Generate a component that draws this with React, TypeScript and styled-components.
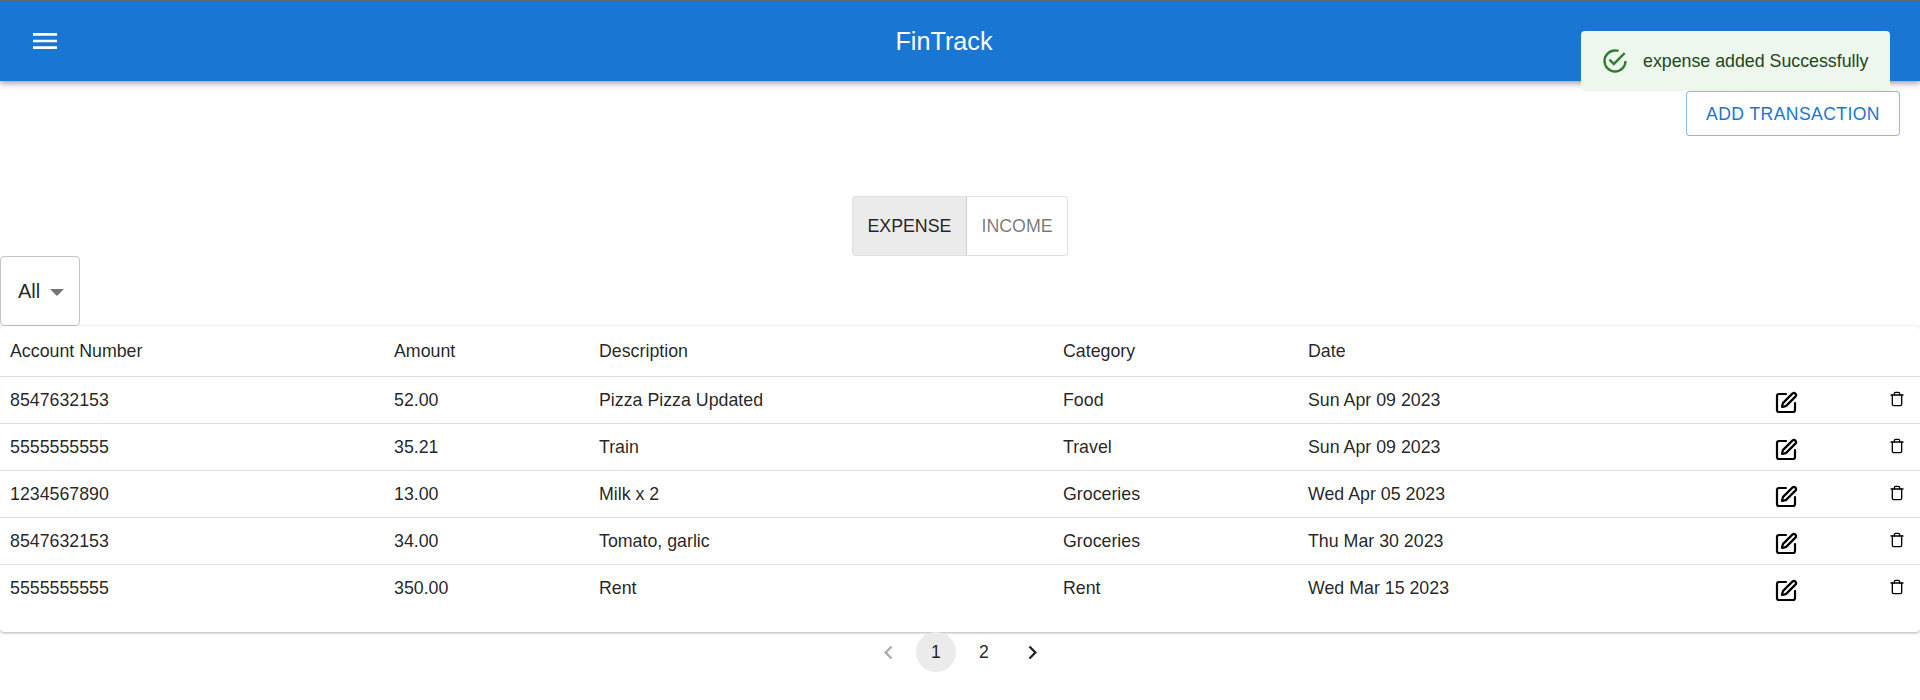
import styled, { createGlobalStyle } from "styled-components";
import { SquarePen, Trash } from "lucide-react";

interface ITransaction {
  account: string;
  amount: string;
  description: string;
  category: string;
  date: string;
}

const transactions: ITransaction[] = [
  { account: "8547632153", amount: "52.00", description: "Pizza Pizza Updated", category: "Food", date: "Sun Apr 09 2023" },
  { account: "5555555555", amount: "35.21", description: "Train", category: "Travel", date: "Sun Apr 09 2023" },
  { account: "1234567890", amount: "13.00", description: "Milk x 2", category: "Groceries", date: "Wed Apr 05 2023" },
  { account: "8547632153", amount: "34.00", description: "Tomato, garlic", category: "Groceries", date: "Thu Mar 30 2023" },
  { account: "5555555555", amount: "350.00", description: "Rent", category: "Rent", date: "Wed Mar 15 2023" },
];

const GlobalStyle = createGlobalStyle`
  * {
    box-sizing: border-box;
  }
  body {
    margin: 0;
    background: #fff;
    color: rgba(0, 0, 0, 0.87);
    font-family: "Liberation Sans", Arial, sans-serif;
  }
`;

const AppBar = styled.header`
  display: flex;
  align-items: center;
  height: 81px;
  padding: 0 24px 0 29px;
  position: relative;
  background: #1976d2;
  border-top: 1px solid #5f6b78;
  color: #fff;
  box-shadow: 0 2px 4px -1px rgba(0, 0, 0, 0.2), 0 4px 5px 0 rgba(0, 0, 0, 0.14),
    0 1px 10px 0 rgba(0, 0, 0, 0.12);
`;
const MenuButton = styled.button`
  display: flex;
  padding: 0;
  border: 0;
  background: none;
  color: inherit;
`;
const Title = styled.h1`
  flex: 1;
  margin: 0;
  padding: 1px 69px 0 0;
  font-size: 25.2px;
  font-weight: 400;
  text-align: center;
`;
const Toast = styled.div`
  position: fixed;
  top: 31px;
  left: 1581px;
  display: flex;
  align-items: center;
  gap: 14px;
  width: 309px;
  height: 60px;
  padding: 0 16px 0 20px;
  background: #edf7ed;
  border-radius: 4px;
  color: #1e4620;
  font-size: 17.8px;
  white-space: nowrap;
`;
const ButtonRow = styled.div`
  display: flex;
  justify-content: flex-end;
  padding: 10px 20px 0 0;
`;
const OutlineButton = styled.button`
  width: 214px;
  height: 45px;
  padding: 1px 0 0;
  background: #fff;
  border: 1px solid rgba(25, 118, 210, 0.5);
  border-radius: 4px;
  color: #1976d2;
  font-family: inherit;
  font-size: 17.6px;
  letter-spacing: 0.4px;
`;
const ToggleRow = styled.div`
  display: flex;
  justify-content: center;
  margin-top: 60px;
`;
const ToggleButton = styled.button<{ $active?: boolean }>`
  height: 60px;
  padding: 1px 14.5px 0;
  background: ${(props) => (props.$active ? "#ebebeb" : "#fff")};
  border: 1px solid #e0e0e0;
  border-left-width: ${(props) => (props.$active ? "1px" : "0")};
  border-radius: ${(props) => (props.$active ? "4px 0 0 4px" : "0 4px 4px 0")};
  color: ${(props) => (props.$active ? "rgba(0, 0, 0, 0.87)" : "rgba(0, 0, 0, 0.54)")};
  font-family: inherit;
  font-size: 17.8px;
  ${(props) => props.$active && "border-right-color: #cfcfcf;"}
`;
const SelectBox = styled.div`
  display: flex;
  align-items: center;
  gap: 10px;
  width: 80px;
  height: 70px;
  padding: 0 0 0 17px;
  border: 1px solid #c4c4c4;
  border-radius: 4px;
  font-size: 20px;
`;
const Caret = styled.span`
  width: 0;
  height: 0;
  margin-top: 2px;
  border-left: 7px solid transparent;
  border-right: 7px solid transparent;
  border-top: 7px solid #757575;
`;
const Paper = styled.div`
  height: 306px;
  background: #fff;
  border-radius: 4px;
  box-shadow: 0 1px 3px 0 rgba(0, 0, 0, 0.3), 0 0 1px 0 rgba(0, 0, 0, 0.1);
`;
const Table = styled.table`
  width: 100%;
  border-collapse: collapse;
  table-layout: fixed;
  font-size: 17.8px;
`;
const Th = styled.th<{ $width?: number }>`
  width: ${(props) => (props.$width ? `${props.$width}px` : "auto")};
  height: 50px;
  padding: 1px 10px 0;
  border-bottom: 1px solid #e0e0e0;
  font-weight: 400;
  text-align: left;
`;
const Td = styled.td`
  height: 47px;
  padding: 2px 10px 0;
  border-bottom: 1px solid #e0e0e0;
  tr:last-child & {
    border-bottom: 0;
  }
`;
const IconCell = styled(Td)`
  line-height: 0;
  padding: 6px 0 0 16px;
`;
const TrashCell = styled(Td)`
  line-height: 0;
  padding: 0 0 2px 17px;
`;
const Pagination = styled.nav`
  display: flex;
  justify-content: center;
  gap: 8px;
`;
const PageItem = styled.button<{ $active?: boolean; $disabled?: boolean }>`
  display: flex;
  align-items: center;
  justify-content: center;
  width: 40px;
  height: 40px;
  padding: 0;
  background: ${(props) => (props.$active ? "#ebebeb" : "transparent")};
  border: 0;
  border-radius: 50%;
  color: rgba(0, 0, 0, 0.87);
  font-family: inherit;
  font-size: 17.6px;
  opacity: ${(props) => (props.$disabled ? 0.38 : 1)};
`;

const App = () => {
  return (
    <>
      <GlobalStyle />
      <AppBar>
        <MenuButton aria-label="menu">
          <svg width="32" height="32" viewBox="0 0 24 24" fill="currentColor">
            <path d="M3 18h18v-2H3v2zm0-5h18v-2H3v2zm0-7v2h18V6H3z" />
          </svg>
        </MenuButton>
        <Title>FinTrack</Title>
      </AppBar>
      <Toast>
        <svg width="28" height="28" viewBox="0 0 24 24" fill="#2e7d32">
          <path d="M20,12A8,8 0 0,1 12,20A8,8 0 0,1 4,12A8,8 0 0,1 12,4C12.76,4 13.5,4.11 14.2,4.31L15.77,2.74C14.5,2.26 13.28,2 12,2A10,10 0 0,0 2,12A10,10 0 0,0 12,22A10,10 0 0,0 22,12M7.91,10.08L6.5,11.5L11,16L21,6L19.59,4.58L11,13.17L7.91,10.08Z" />
        </svg>
        expense added Successfully
      </Toast>
      <ButtonRow>
        <OutlineButton>ADD TRANSACTION</OutlineButton>
      </ButtonRow>
      <ToggleRow>
        <ToggleButton $active>EXPENSE</ToggleButton>
        <ToggleButton>INCOME</ToggleButton>
      </ToggleRow>
      <SelectBox>
        All
        <Caret />
      </SelectBox>
      <Paper>
        <Table>
          <thead>
            <tr>
              <Th $width={384}>Account Number</Th>
              <Th $width={205}>Amount</Th>
              <Th $width={464}>Description</Th>
              <Th $width={245}>Category</Th>
              <Th $width={460}>Date</Th>
              <Th $width={114} />
              <Th />
            </tr>
          </thead>
          <tbody>
            {transactions.map((item, index) => (
              <tr key={index}>
                <Td>{item.account}</Td>
                <Td>{item.amount}</Td>
                <Td>{item.description}</Td>
                <Td>{item.category}</Td>
                <Td>{item.date}</Td>
                <IconCell>
                  <SquarePen size={24} color="#000" strokeWidth={2.2} />
                </IconCell>
                <TrashCell>
                  <Trash size={16} color="#000" strokeWidth={2} />
                </TrashCell>
              </tr>
            ))}
          </tbody>
        </Table>
      </Paper>
      <Pagination>
        <PageItem $disabled aria-label="previous">
          <svg width="27" height="27" viewBox="0 0 24 24" fill="currentColor">
            <path d="M15.41 7.41 14 6l-6 6 6 6 1.41-1.41L10.83 12z" />
          </svg>
        </PageItem>
        <PageItem $active>1</PageItem>
        <PageItem>2</PageItem>
        <PageItem aria-label="next">
          <svg width="27" height="27" viewBox="0 0 24 24" fill="currentColor">
            <path d="M10 6 8.59 7.41 13.17 12l-4.58 4.58L10 18l6-6z" />
          </svg>
        </PageItem>
      </Pagination>
    </>
  );
};

export default App;
